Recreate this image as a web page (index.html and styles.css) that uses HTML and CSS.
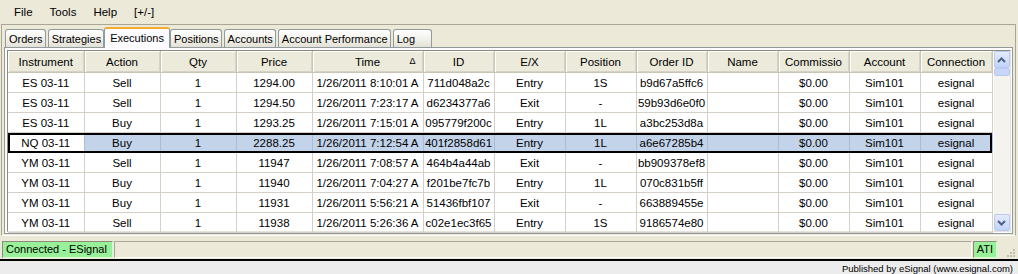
FILE: index.html
```html
<!DOCTYPE html>
<html lang="en">
<head>
  <meta charset="UTF-8">
  <title>Executions</title>
  <link rel="stylesheet" href="styles.css">
</head>
<body>

<div class="menubar">
  <span class="menu-item">File</span>
  <span class="menu-item">Tools</span>
  <span class="menu-item">Help</span>
  <span class="menu-item">[+/-]</span>
</div>

<div class="window">
  <div class="tabs">
    <div class="tab">Orders</div>
    <div class="tab">Strategies</div>
    <div class="tab active">Executions</div>
    <div class="tab">Positions</div>
    <div class="tab">Accounts</div>
    <div class="tab">Account Performance</div>
    <div class="tab">Log</div>
  </div>

  <div class="tab-page">
    <div class="grid">
      <table>
        <colgroup>
          <col style="width:76px"><col style="width:76px"><col style="width:76px"><col style="width:76px">
          <col style="width:111px"><col style="width:71px"><col style="width:71px"><col style="width:71px">
          <col style="width:71px"><col style="width:71px"><col style="width:71px"><col style="width:71px">
          <col style="width:72px">
        </colgroup>
        <thead>
          <tr>
            <th>Instrument</th><th>Action</th><th>Qty</th><th>Price</th>
            <th class="sorted">Time<span class="sort">&#916;</span></th>
            <th>ID</th><th>E/X</th><th>Position</th><th>Order ID</th><th>Name</th>
            <th>Commissio</th><th>Account</th><th>Connection</th>
          </tr>
        </thead>
        <tbody>
          <tr><td>ES 03-11</td><td>Sell</td><td>1</td><td>1294.00</td><td>1/26/2011 8:10:01 A</td><td>711d048a2c</td><td>Entry</td><td>1S</td><td>b9d67a5ffc6</td><td></td><td>$0.00</td><td>Sim101</td><td>esignal</td></tr>
          <tr><td>ES 03-11</td><td>Sell</td><td>1</td><td>1294.50</td><td>1/26/2011 7:23:17 A</td><td>d6234377a6</td><td>Exit</td><td>-</td><td>59b93d6e0f0</td><td></td><td>$0.00</td><td>Sim101</td><td>esignal</td></tr>
          <tr><td>ES 03-11</td><td>Buy</td><td>1</td><td>1293.25</td><td>1/26/2011 7:15:01 A</td><td>095779f200c</td><td>Entry</td><td>1L</td><td>a3bc253d8a</td><td></td><td>$0.00</td><td>Sim101</td><td>esignal</td></tr>
          <tr class="selected"><td>NQ 03-11</td><td>Buy</td><td>1</td><td>2288.25</td><td>1/26/2011 7:12:54 A</td><td>401f2858d61</td><td>Entry</td><td>1L</td><td>a6e67285b4</td><td></td><td>$0.00</td><td>Sim101</td><td>esignal</td></tr>
          <tr><td>YM 03-11</td><td>Sell</td><td>1</td><td>11947</td><td>1/26/2011 7:08:57 A</td><td>464b4a44ab</td><td>Exit</td><td>-</td><td>bb909378ef8</td><td></td><td>$0.00</td><td>Sim101</td><td>esignal</td></tr>
          <tr><td>YM 03-11</td><td>Buy</td><td>1</td><td>11940</td><td>1/26/2011 7:04:27 A</td><td>f201be7fc7b</td><td>Entry</td><td>1L</td><td>070c831b5ff</td><td></td><td>$0.00</td><td>Sim101</td><td>esignal</td></tr>
          <tr><td>YM 03-11</td><td>Buy</td><td>1</td><td>11931</td><td>1/26/2011 5:56:21 A</td><td>51436fbf107</td><td>Exit</td><td>-</td><td>663889455e</td><td></td><td>$0.00</td><td>Sim101</td><td>esignal</td></tr>
          <tr><td>YM 03-11</td><td>Sell</td><td>1</td><td>11938</td><td>1/26/2011 5:26:36 A</td><td>c02e1ec3f65</td><td>Entry</td><td>1S</td><td>9186574e80</td><td></td><td>$0.00</td><td>Sim101</td><td>esignal</td></tr>
        </tbody>
      </table>
      <div class="scrollbar">
        <div class="sb-btn">
          <svg width="9" height="6" viewBox="0 0 9 6"><path d="M1 5 L4.5 1.5 L8 5" fill="none" stroke="#4d6185" stroke-width="2"/></svg>
        </div>
        <div class="sb-thumb"></div>
        <div class="sb-track"></div>
        <div class="sb-btn">
          <svg width="9" height="6" viewBox="0 0 9 6"><path d="M1 1 L4.5 4.5 L8 1" fill="none" stroke="#4d6185" stroke-width="2"/></svg>
        </div>
      </div>
    </div>
  </div>
</div>

<div class="statusbar">
  <div class="status-green">Connected - ESignal</div>
  <div class="status-panel"></div>
  <div class="status-green ati">ATI</div>
  <div class="grip">
    <svg width="12" height="12" viewBox="0 0 12 12">
      <g fill="#c2bfb0">
        <rect x="9" y="3" width="2" height="2"/>
        <rect x="6" y="6" width="2" height="2"/><rect x="9" y="6" width="2" height="2"/>
        <rect x="3" y="9" width="2" height="2"/><rect x="6" y="9" width="2" height="2"/><rect x="9" y="9" width="2" height="2"/>
      </g>
    </svg>
  </div>
</div>

<div class="footer">Published by eSignal (www.esignal.com)</div>

</body>
</html>
```

FILE: styles.css
```css
body {
  margin: 0;
  width: 1018px;
  height: 274px;
  overflow: hidden;
  background: #ece9d8;
  font-family: 'Liberation Sans', Arial, sans-serif;
  font-size: 11px;
  color: #000;
}
.menubar {
  height: 24px;
  display: flex;
  align-items: center;
  padding-left: 14px;
  gap: 17px;
  box-sizing: border-box;
  font-size: 11.5px;
}
.window {
  margin: 0 2px 0 1px;
  border-left: 1px solid #a9a695;
  border-right: 1px solid #a9a695;
  border-top: 1px solid #a9a695;
  border-bottom: 1px solid #fff;
  height: 212px;
  box-sizing: border-box;
  padding: 1px 2px 0 2px;
}
.tabs {
  display: flex;
  height: 21px;
  align-items: flex-end;
  padding-left: 1px;
}
.tab {
  height: 18px;
  line-height: 18px;
  min-width: 39px;
  padding: 0 2px 0 3px;
  border: 1px solid #919b9c;
  border-bottom: none;
  border-radius: 3px 3px 0 0;
  background: linear-gradient(#ffffff, #f0efe8 60%, #e3e1d6);
  margin-right: 2px;
  box-sizing: border-box;
  white-space: nowrap;
}
.tab.active {
  height: 21px;
  line-height: 19px;
  background: #fcfcfe;
  border-top: 2px solid #f5a92d;
  padding: 0 5px;
  margin: 0 0 -1px -2px;
  position: relative;
  z-index: 1;
}
.tab-page {
  border: 1px solid #919b9c;
  background: #fcfcfe;
  height: 187px;
  box-sizing: border-box;
  padding: 2px;
}
.grid {
  display: flex;
  border: 1px solid #8d8a7c;
  border-color: #8d8a7c #e6e4da #e6e4da #8d8a7c;
  background: #fff;
  height: 182px;
  box-sizing: border-box;
  width: 1004px;
}
table {
  border-collapse: collapse;
  table-layout: fixed;
  width: 984px;
}
th {
  height: 21px;
  font-weight: normal;
  font-size: 11.5px;
  background: #ebeadb;
  border-right: 1px solid #c8c5b5;
  border-bottom: 1px solid #c8c5b5;
  box-shadow: inset 1px 1px 0 #fff, inset -1px -1px 0 #d6d3c6;
  padding: 0;
  text-align: center;
  white-space: nowrap;
  overflow: hidden;
}
th.sorted {
  position: relative;
}
.sort {
  position: absolute;
  right: 7px;
  top: 5px;
  font-size: 9px;
}
td {
  height: 19px;
  padding: 0;
  font-size: 11.5px;
  text-align: center;
  border-right: 1px solid #d4d0c8;
  border-bottom: 1px solid #d4d0c8;
  white-space: nowrap;
  overflow: hidden;
}
tr.selected {
  outline: 2px solid #000;
  outline-offset: -2px;
}
tr.selected td {
  background: #c2d3ea;
  border-right-color: #a9bbd6;
}
tr.selected td:first-child {
  background: #fff;
}
.scrollbar {
  width: 17px;
  margin-left: 1px;
  display: flex;
  flex-direction: column;
  background: #f4f3ee;
}
.sb-btn {
  height: 17px;
  box-sizing: border-box;
  border: 1px solid #b9c9ef;
  border-radius: 2px;
  background: linear-gradient(#e4ecfd, #c1d3fb);
  display: flex;
  align-items: center;
  justify-content: center;
}
.sb-thumb {
  height: 6px;
  border: 1px solid #b9c9ef;
  border-radius: 2px;
  background: #c8d6fa;
}
.sb-track {
  flex: 1;
}
.statusbar {
  display: flex;
  align-items: stretch;
  height: 17px;
  margin-top: 5px;
  padding: 0 2px;
  gap: 1px;
}
.status-green {
  background: #98f098;
  border: 1px solid #8d8a7c;
  border-color: #8d8a7c #d2fbd2 #d2fbd2 #8d8a7c;
  padding: 0 5px 0 3px;
  line-height: 15px;
  font-size: 11px;
}
.status-panel {
  flex: 1;
  border: 1px solid #aca899;
  border-color: #aca899 #fff #fff #aca899;
}
.ati {
  padding: 0 3px;
}
.grip {
  width: 18px;
  display: flex;
  align-items: flex-end;
  justify-content: flex-end;
}
.footer {
  border-top: 2px solid #000;
  margin-top: 1px;
  background: #ececec;
  height: 15px;
  text-align: right;
  padding-right: 5px;
  line-height: 15px;
  font-size: 9.5px;
}
```
